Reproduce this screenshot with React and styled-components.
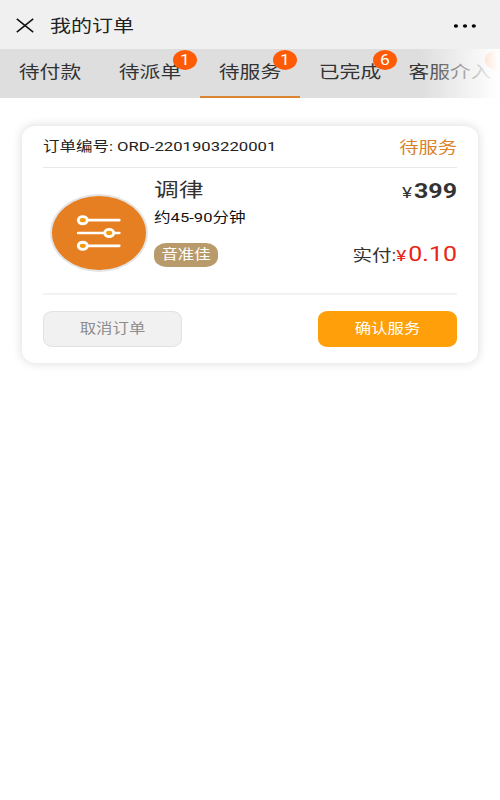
import React, { useState } from "react";
import styled, { createGlobalStyle } from "styled-components";

const tabs = [
  { name: "待付款", count: 0 },
  { name: "待派单", count: 1 },
  { name: "待服务", count: 1 },
  { name: "已完成", count: 6 },
  { name: "客服介入", count: 1, wide: true },
];

const order = {
  number: "ORD-2201903220001",
  status: "待服务",
  name: "调律",
  duration: "约45-90分钟",
  tag: "音准佳",
  price: "399",
  paid: "0.10",
};

function SlidersIcon() {
  return (
    <svg width="46" height="38" viewBox="0 0 46 38">
      <g stroke="#fff" strokeWidth="2.7" strokeLinecap="round">
        <path d="M6 6.2H43.3M2.2 19H43.3M6 31.8H43.3" />
      </g>
      <g fill="#f59a0c" stroke="#fff" strokeWidth="2.9">
        <ellipse cx="6.8" cy="6.2" rx="4.5" ry="3.6" />
        <ellipse cx="33.2" cy="19" rx="4.5" ry="3.6" />
        <ellipse cx="6.8" cy="31.8" rx="4.5" ry="3.6" />
      </g>
    </svg>
  );
}

export default function App() {
  const [active, setActive] = useState(2);

  return (
    <Page>
      <GlobalStyle />
      <TopBar>
        <IconButton aria-label="close">
          <svg width="18" height="15" viewBox="0 0 18 15">
            <path
              d="M0.8 0.8L17.2 14.2M17.2 0.8L0.8 14.2"
              stroke="#111"
              strokeWidth="1.5"
            />
          </svg>
        </IconButton>
        <Title>我的订单</Title>
        <IconButton aria-label="more">
          <svg width="24" height="4" viewBox="0 0 24 4">
            <ellipse cx="2" cy="2" rx="2.1" ry="1.7" />
            <ellipse cx="11" cy="2" rx="2.1" ry="1.7" />
            <ellipse cx="19.8" cy="2" rx="2.1" ry="1.7" />
          </svg>
        </IconButton>
      </TopBar>
      <Tabs>
        {tabs.map(({ name, count, wide }, index) => (
          <Tab
            key={name}
            $active={index === active}
            onClick={() => setActive(index)}
          >
            <Text $size={20.8}>{name}</Text>
            {count > 0 && (
              <Badge $wide={wide}>
                <Text $size={17.5}>{count}</Text>
              </Badge>
            )}
          </Tab>
        ))}
      </Tabs>
      <Card>
        <CardHeader>
          <Text $size={16.5} $color="#222">
            订单编号: <OrderNumber>{order.number}</OrderNumber>
          </Text>
          <Status>{order.status}</Status>
        </CardHeader>
        <CardBody>
          <Avatar>
            <SlidersIcon />
          </Avatar>
          <Details>
            <Name>{order.name}</Name>
            <Duration>{order.duration}</Duration>
            <Tag>
              <Text $size={16.4}>{order.tag}</Text>
            </Tag>
          </Details>
          <Amounts>
            <Price>
              <Currency>¥</Currency>
              <b>{order.price}</b>
            </Price>
            <Paid>
              实付:
              <Currency $red>¥</Currency>
              <em>{order.paid}</em>
            </Paid>
          </Amounts>
        </CardBody>
        <CardFooter>
          <Button>
            <Text $size={16.4}>取消订单</Text>
          </Button>
          <Button $primary>
            <Text $size={16.4}>确认服务</Text>
          </Button>
        </CardFooter>
      </Card>
    </Page>
  );
}

const GlobalStyle = createGlobalStyle`
  * {
    box-sizing: border-box;
  }
  body {
    background: #fff;
    color: #333;
    font-family: Roboto, "Noto Sans CJK SC", sans-serif;
    margin: 0;
    overflow: hidden;
  }
  button {
    background: none;
    border: 0;
    color: inherit;
    cursor: pointer;
    font-family: inherit;
    padding: 0;
  }
`;

const Page = styled.div`
  min-height: 800px;
  width: 500px;
`;

// Wide letterforms: full width, flattened height
const Text = styled.span`
  color: ${({ $color }) => $color || "inherit"};
  display: block;
  font-size: ${({ $size }) => $size}px;
  font-weight: 400;
  line-height: 24px;
  transform: scaleY(0.8);
  white-space: nowrap;
`;

const TopBar = styled.header`
  align-items: center;
  background: #f0f0f0;
  display: flex;
  height: 49px;
  padding: 2px 22px 0 16px;
`;

const IconButton = styled.button`
  display: flex;
`;

const Title = styled(Text).attrs({ as: "h1", $size: 21, $color: "#222" })`
  flex: 1;
  margin: 0 0 0 16px;
`;

const Tabs = styled.nav`
  background: #dedede;
  display: flex;
  height: 49px;
  overflow: hidden;
  position: relative;
  &::after {
    background: linear-gradient(
      to right,
      rgba(255, 255, 255, 0),
      rgba(255, 255, 255, 0.95) 92%,
      #fff
    );
    content: "";
    inset: 0 0 0 auto;
    pointer-events: none;
    position: absolute;
    width: 80px;
  }
`;

const Tab = styled.button`
  align-items: center;
  border-bottom: 2px solid
    ${({ $active }) => ($active ? "#dc8530" : "transparent")};
  display: flex;
  flex: 0 0 100px;
  justify-content: center;
  padding-bottom: 2px;
  position: relative;
`;

const Badge = styled.span`
  align-items: center;
  background: #ff5a05;
  border-radius: 12px / 10px;
  color: #fff;
  display: flex;
  height: 20px;
  justify-content: center;
  position: absolute;
  right: ${({ $wide }) => ($wide ? "-9px" : "3px")};
  top: 1px;
  width: 24px;
`;

const Card = styled.section`
  background: #fff;
  border-radius: 14px / 12px;
  box-shadow: 0 0 10px 1px rgba(0, 0, 0, 0.13);
  height: 237px;
  margin: 28px 22px 0;
  padding: 0 21px;
`;

const CardHeader = styled.div`
  align-items: center;
  border-bottom: 1px solid #e9e9e9;
  display: flex;
  height: 42px;
  justify-content: space-between;
`;

const OrderNumber = styled.span`
  font-size: 16.7px;
`;

const Status = styled(Text).attrs({ $size: 19.3, $color: "#d9822b" })`
  padding-top: 2px;
`;

const CardBody = styled.div`
  border-bottom: 2px solid #f2f2f2;
  display: flex;
  height: 127px;
`;

const Avatar = styled.div`
  align-items: center;
  background: #e67f22;
  border: 2.5px solid #e4e4e4;
  border-radius: 50%;
  display: flex;
  height: 78px;
  justify-content: center;
  margin: 26px 6px 0 7px;
  width: 98px;
`;

const Details = styled.div`
  align-items: flex-start;
  display: flex;
  flex: 1;
  flex-direction: column;
  padding-top: 11px;
`;

const Name = styled(Text).attrs({ $size: 24.8 })``;

const Duration = styled(Text).attrs({ $size: 16.6, $color: "#111" })`
  margin-top: 3px;
`;

const Tag = styled.span`
  align-items: center;
  background: #b99b6b;
  border-radius: 12px / 10px;
  color: #fff;
  display: flex;
  height: 24px;
  justify-content: center;
  margin-top: 13px;
  width: 64px;
`;

const Amounts = styled.div`
  align-items: flex-end;
  display: flex;
  flex-direction: column;
  justify-content: space-between;
  padding: 11px 0 25px;
`;

const Price = styled(Text).attrs({ $size: 19.3 })`
  b {
    font-size: 25px;
    font-weight: 700;
  }
`;

const Paid = styled(Text).attrs({ $size: 19.5 })`
  em {
    color: #ea2413;
    font-size: 25px;
    font-style: normal;
    font-weight: 400;
  }
`;

const Currency = styled.span`
  color: ${({ $red }) => ($red ? "#ea2413" : "inherit")};
  font-size: 19px;
  font-weight: 400;
  margin-right: 2px;
`;

const CardFooter = styled.div`
  display: flex;
  justify-content: space-between;
  padding-top: 16px;
`;

const Button = styled.button`
  align-items: center;
  background: ${({ $primary }) => ($primary ? "#ffa00a" : "#f1f1f1")};
  border: 1px solid ${({ $primary }) => ($primary ? "#ffa00a" : "#e2e2e2")};
  border-radius: 10px / 8px;
  color: ${({ $primary }) => ($primary ? "#fff" : "#8c8c8c")};
  display: flex;
  height: 36px;
  justify-content: center;
  width: 139px;
`;
